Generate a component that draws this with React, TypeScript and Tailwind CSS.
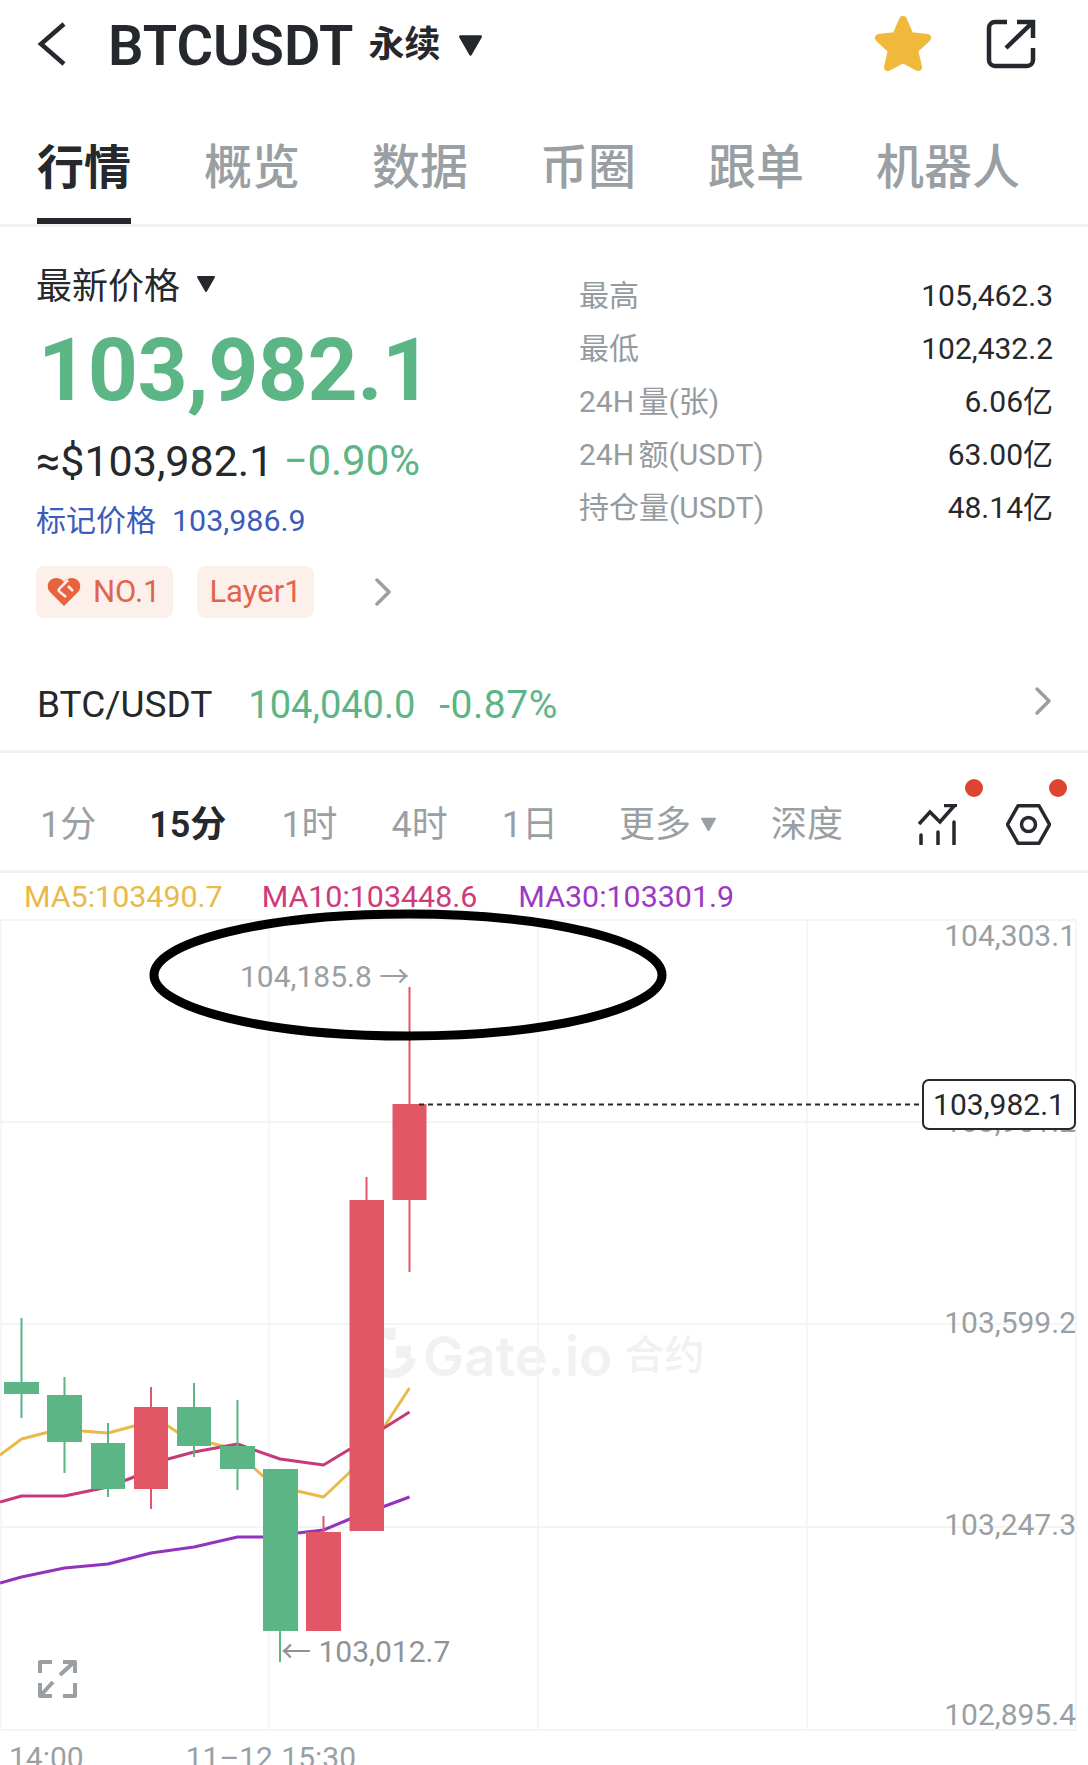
import React from "react";

const tabs = ["概览", "数据", "币圈", "跟单", "机器人"];

const stats = [
    { label: "最高", value: "105,462.3" },
    { label: "最低", value: "102,432.2" },
    { label: "24H 量(张)", value: "6.06亿" },
    { label: "24H 额(USDT)", value: "63.00亿" },
    { label: "持仓量(USDT)", value: "48.14亿" },
];

const GREEN = "#5bb584";
const RED = "#e15765";

// Chart coordinates are page pixels, the group below shifts them by the chart's top
const candles = [
    { x: 4, w: 35, top: 1382, bottom: 1394, wickX: 21.5, high: 1318, low: 1418, color: GREEN },
    { x: 47, w: 35, top: 1395, bottom: 1442, wickX: 64.5, high: 1377, low: 1473, color: GREEN },
    { x: 91, w: 34, top: 1443, bottom: 1489, wickX: 108, high: 1423, low: 1497, color: GREEN },
    { x: 134, w: 34, top: 1407, bottom: 1489, wickX: 151, high: 1387, low: 1509, color: RED },
    { x: 177, w: 34, top: 1407, bottom: 1446, wickX: 194, high: 1383, low: 1457, color: GREEN },
    { x: 220, w: 35, top: 1446, bottom: 1469, wickX: 237.5, high: 1400, low: 1490, color: GREEN },
    { x: 263, w: 35, top: 1469, bottom: 1631, wickX: 280, high: 1469, low: 1662, color: GREEN },
    { x: 306, w: 35, top: 1532, bottom: 1631, wickX: 323.5, high: 1516, low: 1631, color: RED },
    { x: 349.5, w: 34.5, top: 1200, bottom: 1531, wickX: 366.5, high: 1177, low: 1531, color: RED },
    { x: 392.5, w: 34, top: 1104, bottom: 1200, wickX: 409.5, high: 987, low: 1272, color: RED },
];

const ma5 = "0,1455 21.5,1439 64.5,1428 82,1431 108,1433 134,1426 168,1426 177,1432 211,1443 237,1450 254,1468 264,1477 297,1491 323.5,1497 350,1472 384,1427 409.5,1388";
const ma10 = "0,1502 21.5,1496 64.5,1496 108,1487 134,1477 151,1463 168,1459 194,1452 237.5,1444 254,1450 280,1459 323.5,1465 350,1449 384,1428 409.5,1412";
const ma30 = "0,1583 21.5,1577 64.5,1568 108,1564 151,1553 194,1547 237.5,1537 263,1537 323.5,1530 350,1519 409.5,1497";

const CaretDown = ({ className }: { className: string }) => (
    <svg viewBox="0 0 20 18" className={className}>
        <path d="M2 2 H18 L10 16 Z" fill="currentColor" stroke="currentColor" strokeWidth="2" strokeLinejoin="round" />
    </svg>
);

const ChevronRight = ({ className }: { className: string }) => (
    <svg viewBox="0 0 18 28" fill="none" className={className}>
        <path d="M3 2 L15 14 L3 26" stroke="currentColor" strokeWidth="3.5" strokeLinecap="round" strokeLinejoin="round" />
    </svg>
);

const Chart = () => (
    <div className="relative h-[810px] w-full">
        {/* Watermark */}
        <div className="absolute left-[423px] top-[403px] flex items-center whitespace-nowrap text-[#f1f1f2]">
            <span className="font-['Inter',sans-serif] text-[55px] font-semibold leading-[66px]">Gate.io</span>
            <span className="ml-[12px] text-[40px] font-medium leading-[66px]">合约</span>
        </div>

        <svg viewBox="0 0 1088 810" className="absolute inset-0 h-[810px] w-[1088px] overflow-visible" fill="none">
            <g transform="translate(0,-920)">
                {[920, 1122, 1324, 1527, 1730].map(y => (
                    <line key={y} x1="0" x2="1076" y1={y} y2={y} stroke="#eff0f1" strokeWidth="1.5" />
                ))}
                {[1, 269, 538, 807, 1076].map(x => (
                    <line key={x} x1={x} x2={x} y1="920" y2="1730" stroke="#f2f3f4" strokeWidth="1.5" />
                ))}

                {/* Watermark logo */}
                <path d="M412 1358 A21 21 0 1 1 391 1332 V1340" stroke="#f1f1f2" strokeWidth="9" />
                <rect x="396" y="1346" width="15" height="12" fill="#f1f1f2" />

                <polyline points={ma5} stroke="#e9b949" strokeWidth="3" strokeLinejoin="round" />
                <polyline points={ma10} stroke="#c63a78" strokeWidth="3" strokeLinejoin="round" />
                <polyline points={ma30} stroke="#9233bd" strokeWidth="3" strokeLinejoin="round" />

                {candles.map(c => (
                    <g key={c.x} fill={c.color} stroke="none">
                        <rect x={c.wickX - 1} y={c.high} width="2" height={c.low - c.high} />
                        <rect x={c.x} y={c.top} width={c.w} height={c.bottom - c.top} />
                    </g>
                ))}

                <line x1="419" x2="923" y1="1104.5" y2="1104.5" stroke="#25282c" strokeWidth="2" strokeDasharray="5 4" />
                <ellipse cx="408" cy="975" rx="254" ry="61" stroke="#000000" strokeWidth="9" />

                {/* Expand icon */}
                <g stroke="#9a9fa4" strokeWidth="4" strokeLinejoin="round">
                    <path d="M52 1662 H40 V1673 M63 1662 H75 V1673 M60 1675 L73 1663" />
                    <path d="M52 1696 H40 V1683 M75 1683 V1696 H63 M53 1682 L41 1695" />
                </g>
            </g>
        </svg>

        {/* Axis labels */}
        <span className="absolute right-[12px] top-[-4px] text-[30px] leading-[40px] text-[#9a9fa4]">104,303.1</span>
        <span className="absolute right-[12px] top-[182px] text-[30px] leading-[40px] text-[#9a9fa4]">103,951.2</span>
        <span className="absolute right-[12px] top-[383px] text-[30px] leading-[40px] text-[#9a9fa4]">103,599.2</span>
        <span className="absolute right-[12px] top-[585px] text-[30px] leading-[40px] text-[#9a9fa4]">103,247.3</span>
        <span className="absolute right-[12px] top-[775px] text-[30px] leading-[40px] text-[#9a9fa4]">102,895.4</span>

        {/* Last price tag */}
        <div className="absolute left-[922px] top-[159px] flex h-[51px] w-[154px] items-center justify-center rounded-[7px] border-2 border-[#25282c] bg-white text-[30px] text-[#25282c]">
            103,982.1
        </div>

        {/* High and low markers */}
        <span className="absolute left-[240px] top-[37px] whitespace-nowrap text-[30px] leading-[40px] text-[#9a9fa4]">104,185.8 →</span>
        <span className="absolute left-[281px] top-[712px] whitespace-nowrap text-[30px] leading-[40px] text-[#8e9398]">← 103,012.7</span>
    </div>
);

export default function App() {
    return (
        <div className="h-[1765px] w-[1088px] overflow-hidden bg-white font-['Roboto','Noto_Sans_CJK_SC',sans-serif] text-[#25282c]">
            {/* Header */}
            <div className="relative flex h-[88px] items-center pl-[37px] pr-[52px]">
                <svg viewBox="0 0 30 44" fill="none" className="h-[44px] w-[30px]">
                    <path d="M27 2 L4 22 L27 42" stroke="#25282c" strokeWidth="4.5" />
                </svg>
                <span className="ml-[41px] pt-[3px] text-[56px] font-semibold leading-[60px]">BTCUSDT</span>
                <span className="ml-[15px] pt-[2px] text-[36px] font-bold leading-[60px]">永续</span>
                <CaretDown className="ml-[17px] mt-[3px] h-[23px] w-[27px]" />
                <svg viewBox="0 0 60 58" className="ml-auto h-[58px] w-[60px]">
                    <path d="M30 5 L37 21 L54 23 L41 35 L45 52 L30 44 L15 52 L19 35 L6 23 L23 21 Z" fill="#f0b93b" stroke="#f0b93b" strokeWidth="8" strokeLinejoin="round" />
                </svg>
                <svg viewBox="0 0 50 50" fill="none" className="ml-[53px] h-[50px] w-[50px]" stroke="#25282c" strokeWidth="4.5">
                    <path d="M21 3 H9 A6 6 0 0 0 3 9 V41 A6 6 0 0 0 9 47 H41 A6 6 0 0 0 47 41 V29" />
                    <path d="M20 29 L47 3 M31 3 H47 V19" />
                </svg>
            </div>

            {/* Tabs */}
            <div className="flex h-[139px] border-b-[3px] border-[#f0f1f2] pl-[37px]">
                <div className="h-[136px] border-b-[6px] border-[#25282c] pt-[50px] text-[47px] font-bold leading-[60px]">行情</div>
                <div className="ml-[73px] flex gap-[72px] pt-[50px] text-[48px] font-medium leading-[60px] text-[#9a9fa4]">
                    {tabs.map(t => (
                        <span key={t}>{t}</span>
                    ))}
                </div>
            </div>

            {/* Price panel */}
            <div className="flex h-[390px] pl-[36px] pt-[35px]">
                <div className="w-[543px]">
                    <div className="flex h-[50px] items-center text-[36px] leading-[50px]">
                        最新价格
                        <CaretDown className="mb-[6px] ml-[16px] h-[18px] w-[20px]" />
                    </div>
                    <div className="mt-[13px] ml-[2px] text-[87.5px] font-bold leading-[90px] tracking-[-0.5px] text-[#5bb584]">103,982.1</div>
                    <div className="mt-[21px] flex h-[50px] items-center text-[43px] leading-[50px]">
                        <span>≈$103,982.1</span>
                        <span className="ml-[10px] text-[42px] text-[#5bb584]">−0.90%</span>
                    </div>
                    <div className="mt-[15px] flex h-[40px] items-center text-[30px] leading-[40px] text-[#3b5cb8]">
                        <span>标记价格</span>
                        <span className="ml-[16px] text-[30.4px]">103,986.9</span>
                    </div>
                    <div className="mt-[25px] flex h-[52px] items-center">
                        <div className="flex h-[52px] w-[137px] items-center rounded-[8px] bg-[#fdf0ea] pl-[11px] text-[31px] text-[#e0654a]">
                            <svg viewBox="0 0 34 30" className="h-[30px] w-[34px]">
                                <path d="M17 29 L3 15 C-2 9 2 1 9 1 C12 1 15 2 17 5 C19 2 22 1 25 1 C32 1 36 9 31 15 Z" fill="#e8623d" />
                                <path d="M21 3 L12 12 Q11 14 13 15 L19 20 M21 9 L26 14" stroke="#fdf0ea" strokeWidth="2.5" fill="none" />
                            </svg>
                            <span className="ml-[12px]">NO.1</span>
                        </div>
                        <div className="ml-[24px] flex h-[52px] w-[117px] items-center justify-center rounded-[8px] bg-[#fdf0ea] text-[31px] text-[#e0654a]">Layer1</div>
                        <ChevronRight className="ml-[60px] h-[28px] w-[18px] text-[#9a9fa4]" />
                    </div>
                </div>
                <div className="w-[474px] pt-[7px] text-[30px]">
                    {stats.map(s => (
                        <div key={s.label} className="flex h-[53px] items-center justify-between">
                            <span className="text-[#969b9f] [word-spacing:-3px]">{s.label}</span>
                            <span>{s.value}</span>
                        </div>
                    ))}
                </div>
            </div>

            {/* Spot pair row */}
            <div className="mt-[56px] flex h-[60px] items-center pl-[37px] pr-[36px] text-[37px] leading-[60px]">
                <span className="pt-[3px]">BTC/USDT</span>
                <span className="ml-[36px] pt-[3px] text-[38px] text-[#5bb584]">104,040.0</span>
                <span className="ml-[24px] pt-[3px] text-[39px] tracking-[0.5px] text-[#5bb584]">-0.87%</span>
                <ChevronRight className="mb-[4px] ml-auto h-[30px] w-[18px] text-[#9a9fa4]" />
            </div>

            {/* Timeframes */}
            <div className="mt-[17px] flex h-[123px] items-center border-y-[3px] border-[#f0f1f2] pl-[40px] pr-[37px] pt-[26px] text-[36px] text-[#9a9fa4]">
                <span>1分</span>
                <span className="ml-[53px] font-semibold text-[#25282c]">15分</span>
                <span className="ml-[55px]">1时</span>
                <span className="ml-[54px]">4时</span>
                <span className="ml-[54px]">1日</span>
                <span className="ml-[61px]">更多</span>
                <CaretDown className="ml-[9px] h-[15px] w-[17px]" />
                <span className="ml-[54px]">深度</span>
                <div className="relative ml-auto h-[41px] w-[39px]">
                    <svg viewBox="0 0 39 41" fill="none" className="h-[41px] w-[39px]" stroke="#25282c" strokeWidth="3.5">
                        <path d="M1 20 L12 8 L22 18 L36 2 M26 1.5 H38 V3" />
                        <path d="M3 31 V40 M20 28 V40 M36 18 V40" strokeLinecap="round" />
                    </svg>
                    <span className="absolute left-[47px] top-[-25px] h-[18px] w-[18px] rounded-full bg-[#dc4530]" />
                </div>
                <div className="relative ml-[49px] h-[41px] w-[45px]">
                    <svg viewBox="0 0 45 41" fill="none" className="h-[41px] w-[45px]" stroke="#25282c" strokeWidth="3.5">
                        <path d="M1.5 20.5 L12 1.75 H33 L43.5 20.5 L33 39.25 H12 Z" strokeLinejoin="round" />
                        <circle cx="22.5" cy="20.5" r="7" />
                    </svg>
                    <span className="absolute left-[43px] top-[-25px] h-[18px] w-[18px] rounded-full bg-[#dc4530]" />
                </div>
            </div>

            {/* Moving averages */}
            <div className="flex h-[47px] items-center pl-[24px] text-[30.4px] leading-[47px]">
                <span className="text-[#e9b949]">MA5:103490.7</span>
                <span className="ml-[39px] text-[#cf3a78]">MA10:103448.6</span>
                <span className="ml-[41px] text-[#9c38c4]">MA30:103301.9</span>
            </div>

            <Chart />

            {/* Time axis */}
            <div className="flex h-[35px] pl-[9px] pt-[10px] text-[30px] leading-[36px] text-[#9a9fa4]">
                <span>14:00</span>
                <span className="ml-[102px] [word-spacing:1px]">11–12 15:30</span>
            </div>
        </div>
    );
}
